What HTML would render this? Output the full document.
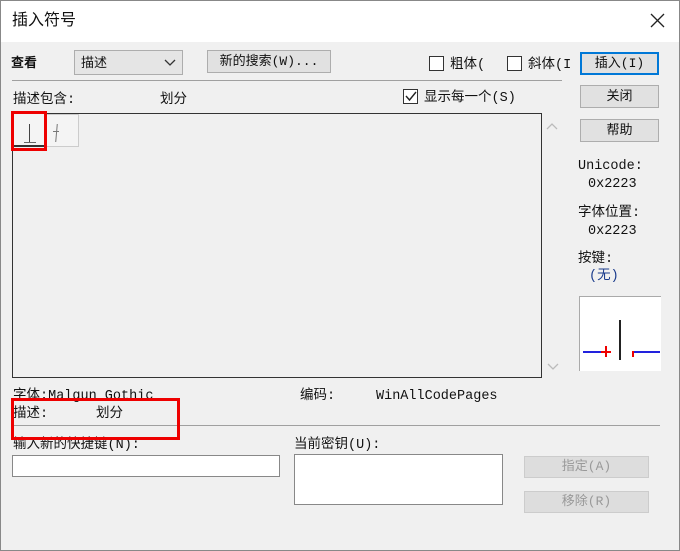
<!DOCTYPE html>
<html><head><meta charset="utf-8"><style>
body{margin:0;width:680px;height:551px;overflow:hidden;background:#f0f0f0;font-family:"Liberation Sans","Noto Sans CJK SC",sans-serif;font-size:13px;color:#111;position:relative}
.a{position:absolute;white-space:nowrap;line-height:16px}
.m{font-family:"Liberation Mono","Noto Sans CJK SC",monospace;font-size:13.5px}
div.a.m{margin-top:4px}
.btn{position:absolute;background:#e1e1e1;border:1px solid #adadad;text-align:center;box-sizing:border-box;line-height:22px;font-size:13px}
.cb{position:absolute;width:15px;height:15px;border:1px solid #333;background:#fff;box-sizing:border-box}
</style></head><body>
<div class="a" style="left:0;top:0;width:680px;height:42px;background:#fff"></div>
<div class="a" style="left:0;top:0;width:678px;height:549px;border:1px solid #888"></div>
<div class="a" style="left:12px;top:12px;font-size:16px;line-height:18px">插入符号</div>
<svg class="a" style="left:650px;top:13px" width="15" height="15"><path d="M1 1L14 14M14 1L1 14" stroke="#222" stroke-width="1.3"/></svg>
<div class="a" style="left:11px;top:55px;font-weight:bold">查看</div>
<div class="a" style="left:74px;top:50px;width:109px;height:25px;border:1px solid #adadad;background:#e5e5e5;box-sizing:border-box"></div>
<div class="a" style="left:81px;top:55px">描述</div>
<svg class="a" style="left:164px;top:59px" width="12" height="8"><path d="M1 1L6 6L11 1" stroke="#333" fill="none" stroke-width="1.3"/></svg>
<div class="btn m" style="left:207px;top:50px;width:124px;height:23px">新的搜索(W)...</div>
<div class="a" style="left:12px;top:80px;width:550px;height:1px;background:#a0a0a0"></div>
<div class="cb" style="left:429px;top:56px"></div><div class="a m" style="left:450px;top:54px">粗体(</div>
<div class="cb" style="left:507px;top:56px"></div><div class="a m" style="left:528px;top:54px">斜体(I</div>
<div class="btn m" style="left:580px;top:52px;width:79px;height:23px;border:2px solid #0078d7;line-height:20px">插入(I)</div>
<div class="btn m" style="left:580px;top:85px;width:79px;height:23px">关闭</div>
<div class="btn m" style="left:580px;top:119px;width:79px;height:23px">帮助</div>
<div class="a m" style="left:13px;top:89px">描述包含:</div>
<div class="a m" style="left:160px;top:89px">划分</div>
<div class="cb" style="left:403px;top:89px"></div>
<svg class="a" style="left:405px;top:91px" width="12" height="11"><path d="M1 5L4.5 9L11 1" stroke="#222" fill="none" stroke-width="1.4"/></svg>
<div class="a m" style="left:424px;top:87px">显示每一个(S)</div>
<div class="a" style="left:12px;top:113px;width:530px;height:265px;border:1px solid #333;box-sizing:border-box;background:#f0f0f0"></div>
<div class="a" style="left:13px;top:114px;width:33px;height:33px;border:1px solid #333;border-width:0 1px 2px 0;box-sizing:border-box;background:#f4f4f4"></div>
<div class="a" style="left:46px;top:114px;width:33px;height:33px;border:1px solid #ccc;border-left:0;box-sizing:border-box;background:#f4f4f4"></div>
<div class="a" style="left:29px;top:124px;width:1px;height:18px;background:#444"></div>
<div class="a" style="left:24px;top:142px;width:12px;height:1px;background:#666"></div>
<div class="a" style="left:56px;top:124px;width:1px;height:18px;background:#777;transform:skewX(-5deg)"></div>
<div class="a" style="left:53px;top:131px;width:6px;height:1px;background:#777"></div>
<div class="a" style="left:11px;top:111px;width:36px;height:40px;border:3px solid #e00;box-sizing:border-box"></div>
<svg class="a" style="left:546px;top:123px" width="12" height="8"><path d="M1 6L6 1L11 6" stroke="#bbb" fill="none" stroke-width="1.3"/></svg>
<svg class="a" style="left:547px;top:363px" width="12" height="8"><path d="M1 1L6 6L11 1" stroke="#bbb" fill="none" stroke-width="1.3"/></svg>
<div class="a m" style="left:578px;top:155px">Unicode:</div>
<div class="a m" style="left:588px;top:173px">0x2223</div>
<div class="a m" style="left:578px;top:202px">字体位置:</div>
<div class="a m" style="left:588px;top:220px">0x2223</div>
<div class="a m" style="left:578px;top:248px">按键:</div>
<div class="a m" style="left:589px;top:265px;color:#1a3b8c">(无)</div>
<div class="a" style="left:579px;top:296px;width:82px;height:75px;background:#fff;border-top:1px solid #aaa;border-left:1px solid #aaa;box-sizing:border-box"></div>
<div class="a" style="left:619px;top:320px;width:2px;height:40px;background:#222"></div>
<div class="a" style="left:583px;top:351px;width:28px;height:2px;background:#2222dd"></div>
<div class="a" style="left:633px;top:351px;width:27px;height:2px;background:#2222dd"></div>
<div class="a" style="left:605px;top:346px;width:2px;height:11px;background:#e00"></div>
<div class="a" style="left:601px;top:351px;width:10px;height:2px;background:#e00"></div>
<div class="a" style="left:632px;top:351px;width:2px;height:6px;background:#e00"></div>
<div class="a m" style="left:13px;top:385px">字体:Malgun Gothic</div>
<div class="a m" style="left:300px;top:385px">编码:</div>
<div class="a m" style="left:376px;top:385px">WinAllCodePages</div>
<div class="a m" style="left:13px;top:403px">描述:</div>
<div class="a m" style="left:96px;top:403px">划分</div>
<div class="a" style="left:12px;top:425px;width:648px;height:1px;background:#a0a0a0"></div>
<div class="a m" style="left:13px;top:434px">输入新的快捷键(N):</div>
<div class="a" style="left:11px;top:398px;width:169px;height:42px;border:3px solid #e00;box-sizing:border-box"></div>
<div class="a" style="left:12px;top:455px;width:268px;height:22px;border:1px solid #888;background:#fff;box-sizing:border-box"></div>
<div class="a m" style="left:294px;top:434px">当前密钥(U):</div>
<div class="a" style="left:294px;top:454px;width:209px;height:51px;border:1px solid #888;background:#fff;box-sizing:border-box"></div>
<div class="btn m" style="left:524px;top:456px;width:125px;height:22px;color:#999;border-color:#ccc;background:#ddd;line-height:20px">指定(A)</div>
<div class="btn m" style="left:524px;top:491px;width:125px;height:22px;color:#999;border-color:#ccc;background:#ddd;line-height:20px">移除(R)</div>
</body></html>
